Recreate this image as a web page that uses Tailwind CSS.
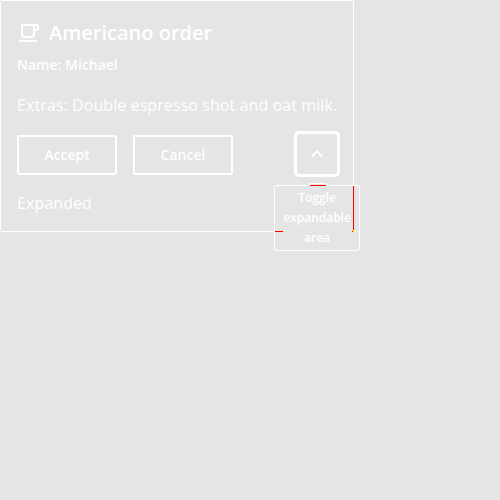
<!DOCTYPE html>
<html lang="en">
<head>
<meta charset="utf-8">
<title>Americano order</title>
<script src="https://cdn.jsdelivr.net/npm/@tailwindcss/browser@4"></script>
</head>
<body class="bg-[#e5e5e5] h-[500px] overflow-hidden text-white font-['Open_Sans',sans-serif]">
<main class="relative w-[354px] h-[232px] border border-white rounded-[2px] px-4 pt-4">
  <header class="flex items-center gap-2 h-8">
    <svg class="w-6 h-6 shrink-0" viewBox="0 0 24 24" fill="#fff"><path d="M20 3H4v10a4 4 0 0 0 4 4h6a4 4 0 0 0 4-4v-3h2a2 2 0 0 0 2-2V5a2 2 0 0 0-2-2zm-4 10a2 2 0 0 1-2 2H8a2 2 0 0 1-2-2V5h10v8zm4-5h-2V5h2v3zM2 19h18v2H2z"/></svg>
    <h1 class="text-xl leading-8 font-semibold whitespace-nowrap">Americano order</h1>
  </header>
  <p class="text-sm leading-8 font-semibold">Name: Michael</p>
  <p class="mt-2 text-base leading-8 tracking-[0.08px] whitespace-nowrap">Extras: Double espresso shot and oat milk.</p>
  <div class="mt-[10px] flex items-start h-[46px] -mr-[3px]">
    <button class="mt-1 w-[100px] h-10 border-2 border-white rounded-[2px] text-sm font-semibold">Accept</button>
    <button class="mt-1 ml-4 w-[100px] h-10 border-2 border-white rounded-[2px] text-sm font-semibold">Cancel</button>
    <button class="ml-auto w-[46px] h-[46px] border-3 border-white rounded-[5px] flex items-center justify-center" aria-label="Toggle expandable area">
      <svg class="w-6 h-6" viewBox="0 0 24 24" fill="#fff"><path d="m12 8-6 6 1.41 1.41L12 10.83l4.59 4.58L18 14z"/></svg>
    </button>
  </div>
  <p class="mt-[10px] text-base leading-8 tracking-[0.08px]">Expanded</p>

  <div class="absolute left-[273px] top-[184px] w-[86px] h-[66px] border border-white rounded-[2px] bg-[#e5e5e5] pt-0.5 text-center text-xs leading-5 font-semibold" role="tooltip">
    Toggle<br>expandable<br>area
    <i class="absolute left-[34px] -top-[3px] w-[18px] h-[2px] border border-b-0 border-white rounded-t-[2px]"></i>
    <i class="absolute left-[35px] -top-px w-4 h-px bg-[#f00]"></i>
    <i class="absolute left-[78px] top-0 w-px h-11 bg-[#f00]"></i>
    <i class="absolute left-[77px] top-[44px] w-0.5 h-0.5 bg-[#ff0]"></i>
    <i class="absolute left-[77px] top-[45px] w-px h-px bg-[#f00]"></i>
    <i class="absolute left-0 top-[45px] w-2 h-px bg-[#f00]"></i>
    <i class="absolute left-2 top-[45px] w-px h-px bg-[#ff0]"></i>
  </div>
</main>
</body>
</html>
